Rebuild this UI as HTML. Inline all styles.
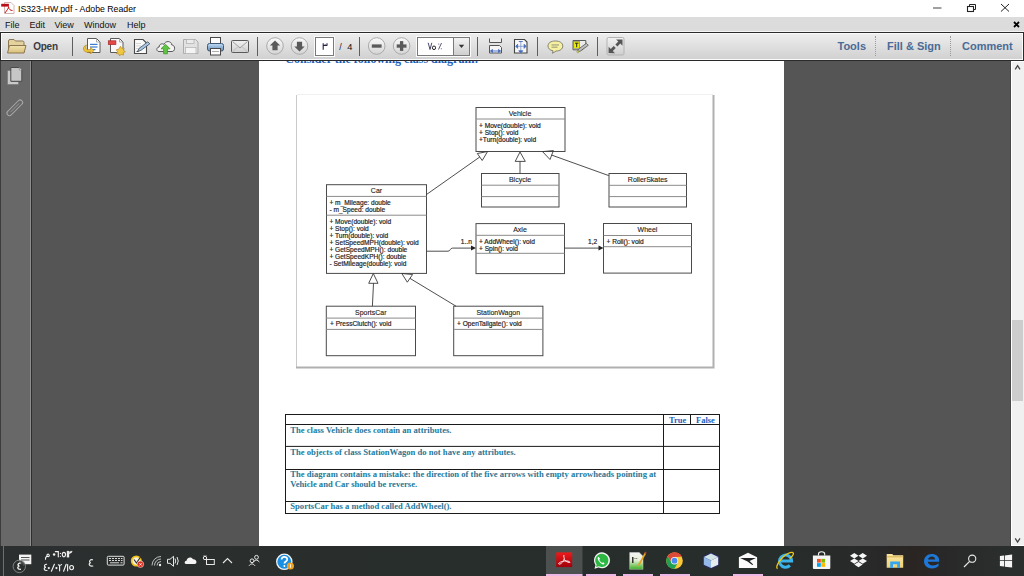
<!DOCTYPE html>
<html><head><meta charset="utf-8">
<style>
*{margin:0;padding:0;box-sizing:border-box}
html,body{width:1024px;height:576px;overflow:hidden;background:#555555;font-family:"Liberation Sans",sans-serif;position:relative}
.a{position:absolute}
.tx{position:absolute;white-space:nowrap;line-height:1}
#title{left:0;top:0;width:1024px;height:17px;background:#fff}
#menu{left:0;top:17px;width:1024px;height:14px;background:#dcdcdc}
#menuw{left:0;top:31px;width:1024px;height:1px;background:#f4f4f4}
#tb{left:0;top:32px;width:1024px;height:29px;background:#2a2a2a}
#tbw{left:1px;top:33px;width:1022px;height:27px;background:#fbfbfb}
#tbin{left:2px;top:34px;width:1020px;height:25px;background:linear-gradient(#ededed,#d1d1d1)}
#side{left:0;top:61px;width:31px;height:485px;background:#686868;border-left:1px solid #3c3c3c}
#sideline{left:30px;top:61px;width:1px;height:485px;background:#8e8e8e}
#sideline2{left:31px;top:61px;width:1px;height:485px;background:#2e2e2e}
#page{left:259px;top:61px;width:525px;height:485px;background:#fff;overflow:hidden}
#sb{left:1011px;top:61px;width:13px;height:485px;background:#f0f0f0;border-left:1px solid #fff;border-top:1px solid #fff;border-bottom:1px solid #fff}
#sbl{left:1010px;top:61px;width:1px;height:485px;background:#474747}
#thumb{left:1012px;top:320px;width:11px;height:81px;background:#cdcdcd}
#task{left:0;top:546px;width:1024px;height:30px;background:linear-gradient(90deg,#2c2f2f 0px,#2a2e2d 250px,#282e2b 450px,#272d2a 780px,#29292a 870px,#2a2522 915px,#29292a 950px,#2a2e2c 1000px,#2a2e2c 1024px)}
.menu{top:21px;font-size:9px;color:#111}
.sep{position:absolute;width:1px;background:#5e5e5e}
.rt{font-weight:bold;font-size:11px;color:#4a6b96;top:41px}
.dsep{position:absolute;top:36px;height:20px;width:1px;border-left:1px dotted #9a9a9a}
</style></head><body>
<div id="title" class="a"></div>
<div id="menu" class="a"></div><div id="menuw" class="a"></div>
<div id="tb" class="a"></div><div id="tbw" class="a"></div><div id="tbin" class="a"></div>
<div id="side" class="a"></div><div id="sideline" class="a"></div><div id="sideline2" class="a"></div>
<div id="page" class="a"></div>
<div id="sbl" class="a"></div><div id="sb" class="a"></div><div id="thumb" class="a"></div>
<div id="task" class="a"></div>

<!-- title text -->
<div class="tx" style="left:17.5px;top:4px;font-size:9.6px;color:#000;transform:scaleX(0.91);transform-origin:0 0">IS323-HW.pdf - Adobe Reader</div>
<div class="tx menu" style="left:5px">File</div>
<div class="tx menu" style="left:29.5px">Edit</div>
<div class="tx menu" style="left:54.5px">View</div>
<div class="tx menu" style="left:84px">Window</div>
<div class="tx menu" style="left:127px">Help</div>

<!-- toolbar text -->
<div class="tx" style="left:33.2px;top:42.3px;font-size:10px;font-weight:bold;color:#3a3a40;letter-spacing:-0.25px">Open</div>
<div class="tx rt" style="left:837.5px">Tools</div>
<div class="tx rt" style="left:887px">Fill &amp; Sign</div>
<div class="tx rt" style="left:962px">Comment</div>
<div class="dsep" style="left:875px"></div>
<div class="dsep" style="left:950px"></div>
<div class="sep" style="left:72px;top:37px;height:19px"></div>
<div class="sep" style="left:257px;top:37px;height:19px"></div>
<div class="sep" style="left:359px;top:37px;height:19px"></div>
<div class="sep" style="left:477px;top:37px;height:19px"></div>
<div class="sep" style="left:537px;top:37px;height:19px"></div>
<div class="sep" style="left:597px;top:37px;height:19px"></div>


<svg class="a" style="left:0;top:0" width="1024" height="576" viewBox="0 0 1024 576">
<defs>
<linearGradient id="gFold" x1="0" y1="0" x2="0" y2="1"><stop offset="0" stop-color="#f2e3b0"/><stop offset="1" stop-color="#d9c07a"/></linearGradient>
<linearGradient id="gBtn" x1="0" y1="0" x2="0" y2="1"><stop offset="0" stop-color="#fafafa"/><stop offset="1" stop-color="#d4d4d4"/></linearGradient>
<linearGradient id="gPr" x1="0" y1="0" x2="0" y2="1"><stop offset="0" stop-color="#c4dcf2"/><stop offset="1" stop-color="#5f8fc0"/></linearGradient>
<linearGradient id="gEnv" x1="0" y1="0" x2="0" y2="1"><stop offset="0" stop-color="#f2f2f2"/><stop offset="1" stop-color="#cfcfcf"/></linearGradient>
</defs>
<!-- title acrobat icon -->
<path d="M4.5,2.5 h6.5 l3,3 v8 h-9.5 z" fill="#fff" stroke="#c9a0a0" stroke-width="0.8"/>
<rect x="1.2" y="3.8" width="7.7" height="2.8" fill="#b8101a"/>
<path d="M5,13 C7,10 9,8 8.5,6.5 M8.5,7 C9,9.5 10.5,10.5 12.5,10.5" stroke="#d01010" stroke-width="1" fill="none"/>
<!-- window controls -->
<rect x="933" y="7.5" width="8.5" height="1" fill="#444"/>
<rect x="967.5" y="6.5" width="6" height="5" fill="none" stroke="#222" stroke-width="1.1"/>
<path d="M969.5,6.5 v-2 h6 v5 h-2" fill="none" stroke="#222" stroke-width="1"/>
<path d="M1001,4 L1009,11.5 M1009,4 L1001,11.5" stroke="#222" stroke-width="1"/>
<path d="M1014,22 L1019,27 M1019,22 L1014,27" stroke="#000" stroke-width="1.8"/>
<!-- folder -->
<path d="M8.5,52.5 V41 q0,-1.5 1.5,-1.5 h4 l1.5,1.5 h7 q1.5,0 1.5,1.5 v10 z" fill="#e4d29c" stroke="#8c7650" stroke-width="1"/>
<path d="M7.5,53 L9.5,45.5 h16.5 L24,53 z" fill="url(#gFold)" stroke="#8c7650" stroke-width="1" stroke-linejoin="round"/>
<!-- doc icon 1 -->
<path d="M87.5,38.5 h9 l3.5,3.5 v10.5 h-12.5 z" fill="#fff" stroke="#5a5a5a" stroke-width="1"/>
<path d="M96.5,38.5 v3.5 h3.5" fill="none" stroke="#999" stroke-width="0.8"/>
<rect x="90" y="43.8" width="7.5" height="1.2" fill="#3a7ad0"/>
<rect x="90" y="46.4" width="7.5" height="1.2" fill="#3a7ad0"/>
<rect x="90" y="49" width="5.5" height="1.2" fill="#3a7ad0"/>
<path d="M86.5,45 C83,46 82.5,50 85,51.5 C86.5,52.5 89,52.5 90.5,51.8 L90.5,54 L94,50.5 L90.5,47.5 L90.5,49.3 C88.5,50 86.5,50 86,48.5 C85.5,47 86,46 86.5,45 z" fill="#f0c43a" stroke="#b48a22" stroke-width="0.7"/>
<!-- doc icon 2 -->
<path d="M110.5,38.5 h9 l3.5,3.5 v10.5 h-12.5 z" fill="#f8f8f8" stroke="#5a5a5a" stroke-width="1"/>
<path d="M119.5,38.5 v3.5 h3.5" fill="none" stroke="#999" stroke-width="0.8"/>
<rect x="108.3" y="40.8" width="7.6" height="3.8" fill="#e34848" stroke="#a82828" stroke-width="0.7"/>
<path d="M120.5,46.3 l1.2,2.1 2.4,-0.4 -0.6,2.3 1.9,1.4 -2.1,1 0.2,2.4 -2.3,-0.9 -1.6,1.8 -0.9,-2.2 -2.4,-0.1 1.3,-2 -1.3,-2 2.3,-0.4 z" fill="#f0c840" stroke="#b08a30" stroke-width="0.7"/>
<!-- sign icon -->
<path d="M134.5,39.5 h8.5 l3.5,3.5 v10.5 h-12 z" fill="#fafafa" stroke="#4a4a4a" stroke-width="1.1"/>
<rect x="136" y="43" width="5" height="0.8" fill="#ccc"/><rect x="136" y="45.5" width="5" height="0.8" fill="#ccc"/><rect x="136" y="48" width="4" height="0.8" fill="#ccc"/>
<path d="M137.5,51.5 L139,48.5 L147.8,41.8 L149.8,43.8 L141,50.3 z" fill="#a8c8e6" stroke="#3e4a58" stroke-width="0.8"/>
<path d="M136.5,51.5 h2" stroke="#333" stroke-width="0.8"/>
<!-- cloud -->
<path d="M159,51.5 C156,51.5 156.2,47 159.2,47 C159,44 162.5,43 164,44.5 C165,40.5 171.5,40.5 171.8,45 C175.5,45 175.5,51.5 172,51.5 z" fill="#f3f3f3" stroke="#5a5a5a" stroke-width="1"/>
<path d="M165.5,44.3 L170,48.8 h-2.6 v5 h-3.8 v-5 h-2.6 z" fill="#62c444" stroke="#3b9a22" stroke-width="0.8"/>
<!-- save (disabled) -->
<path d="M183.5,39.5 h12 l2.5,2.5 v11.5 h-14.5 z" fill="#e2e2e2" stroke="#ababab" stroke-width="1"/>
<rect x="186.5" y="39.5" width="7.5" height="4" fill="#ececec" stroke="#b4b4b4" stroke-width="0.8"/>
<rect x="185.5" y="47.5" width="10.5" height="6" fill="#f4f4f4" stroke="#b8b8b8" stroke-width="0.8"/>
<!-- printer -->
<rect x="210.5" y="37.5" width="10" height="6" fill="#fdfdfd" stroke="#4a4a4a" stroke-width="1"/>
<rect x="207.5" y="43.5" width="16" height="7.5" rx="2" fill="url(#gPr)" stroke="#3d5878" stroke-width="1"/>
<rect x="210.5" y="48.5" width="10" height="6.5" fill="#fdfdfd" stroke="#4a4a4a" stroke-width="1"/>
<rect x="212" y="51" width="7" height="0.8" fill="#9a9a9a"/>
<!-- envelope -->
<rect x="231.5" y="40.5" width="17" height="12" rx="1" fill="url(#gEnv)" stroke="#5a5a5a" stroke-width="1"/>
<path d="M232.5,41.5 L240,48 L247.5,41.5" fill="none" stroke="#8a8a8a" stroke-width="0.8"/>
<path d="M232.5,52 L237.5,47 M247.5,52 L242.5,47" fill="none" stroke="#a8a8a8" stroke-width="0.6"/>
<!-- up/down circles -->
<circle cx="275" cy="46" r="8.3" fill="url(#gBtn)" stroke="#a4a4a4" stroke-width="0.9"/>
<path d="M275,40.6 L280.2,45.6 h-2.6 v4.6 h-5.2 v-4.6 h-2.6 z" fill="#5a5a5a"/>
<circle cx="299.5" cy="46" r="8.3" fill="url(#gBtn)" stroke="#a4a4a4" stroke-width="0.9"/>
<path d="M299.5,51.4 L304.7,46.4 h-2.6 v-4.6 h-5.2 v4.6 h-2.6 z" fill="#5a5a5a"/>
<!-- page box -->
<rect x="314.5" y="36.5" width="20" height="20" fill="none" stroke="#fafafa" stroke-width="1"/><rect x="315.5" y="37.5" width="18" height="18" fill="#fff" stroke="#7a7a7a" stroke-width="1"/>
<!-- minus/plus -->
<circle cx="376.7" cy="46" r="8.3" fill="url(#gBtn)" stroke="#a4a4a4" stroke-width="0.9"/>
<rect x="371.8" y="44.4" width="9.8" height="3.3" fill="#5a5a5a"/>
<circle cx="401.6" cy="46" r="8.3" fill="url(#gBtn)" stroke="#a4a4a4" stroke-width="0.9"/>
<rect x="396.7" y="44.4" width="9.8" height="3.3" fill="#5a5a5a"/>
<rect x="399.95" y="41.1" width="3.3" height="9.8" fill="#5a5a5a"/>
<!-- zoom box -->
<rect x="416.5" y="36.5" width="54" height="20" fill="none" stroke="#fafafa" stroke-width="1"/>
<rect x="417.5" y="37.5" width="52" height="18" fill="#fff" stroke="#7a7a7a" stroke-width="1"/>
<rect x="454" y="38" width="15" height="17" fill="url(#gEnv)"/>
<path d="M453.5,38 v17.5" stroke="#7a7a7a" stroke-width="1"/>
<path d="M458.8,44.8 h5.4 l-2.7,3.3 z" fill="#333"/>
<!-- fit width -->
<path d="M489.5,38.5 v4 h12 v-4" fill="#ededed" stroke="#555" stroke-width="1"/>
<path d="M489.5,53 v-7.5 h10 l2,2 v5.5 z" fill="#f6f6f6" stroke="#555" stroke-width="1"/>
<path d="M490.5,51 h10 M490.5,51 l2,-1.5 v3 z M500.5,51 l-2,-1.5 v3 z" fill="#4a6ec0" stroke="#4a6ec0" stroke-width="0.9"/>
<!-- fit page -->
<path d="M514.5,39.5 h10 l2.5,2.5 v11 h-12.5 z" fill="#f6f6f6" stroke="#444" stroke-width="1.1"/>
<path d="M520.8,41 v10.5 M516,46.3 h10" stroke="#7a94cc" stroke-width="0.8"/>
<path d="M518.8,41.5 h4 M520.8,53 l-2,-2.2 h4 z M515.8,46.3 l1.8,-2 v4 z M526,46.3 l-1.8,-2 v4 z" fill="#4a6ec0" stroke="#4a6ec0" stroke-width="0.9"/>
<!-- comment -->
<path d="M555.3,41 C560,41 562.8,43 562.8,46 C562.8,49 560,51 556,51 L552.5,53.3 L553,50.8 C550,50.3 548,48.5 548,46 C548,43 550.8,41 555.3,41 z" fill="#f5f1a0" stroke="#7a7a6a" stroke-width="0.9"/>
<rect x="551.5" y="44.5" width="7.5" height="0.9" fill="#8a8a70"/><rect x="551.5" y="46.7" width="6" height="0.9" fill="#8a8a70"/>
<!-- highlight text -->
<path d="M573,40.5 h12.8 v5.5 l-3.5,3.8 h-9.3 z" fill="#ececec" stroke="#5a5a5a" stroke-width="1"/>
<rect x="573.8" y="41.6" width="5.8" height="6.6" fill="#f0f000" stroke="#6a6a30" stroke-width="0.5"/>
<path d="M575,43.2 h3.4 M576.7,43.2 v4" stroke="#222" stroke-width="1"/>
<path d="M577.3,51.8 L578.6,49 L586.3,43.3 L588.3,45.3 L580.5,51 z" fill="#bdbdbd" stroke="#555" stroke-width="0.8"/>
<circle cx="577.8" cy="51.8" r="1" fill="#e8e850" stroke="#808030" stroke-width="0.5"/>
<!-- fullscreen -->
<rect x="607" y="37.5" width="17" height="17.5" rx="1.5" fill="url(#gEnv)" stroke="#b3b3b3" stroke-width="1"/>
<path d="M622.5,39.6 v6.2 l-2.2,-2.2 l-2.9,2.9 l-2,-2 l2.9,-2.9 l-2.2,-2.2 z" fill="#555"/>
<path d="M608.6,53 v-6.2 l2.2,2.2 l2.9,-2.9 l2,2 l-2.9,2.9 l2.2,2.2 z" fill="#555"/>
<!-- side panel icons -->
<path d="M7.5,70.5 h4 v11 h7 v3 h-11 z" fill="#c9c9c9" stroke="#6a6a6a" stroke-width="0.5"/>
<path d="M10.8,67.5 h8.5 l2.5,2.5 v11.3 h-11 z" fill="#c6c6c6" stroke="#4a4a4a" stroke-width="1"/><path d="M19.3,67.5 v2.5 h2.5" fill="#e8e8e8" stroke="#777" stroke-width="0.6"/>
<g transform="rotate(-45 14.8 107.8)" fill="none" stroke="#a8a8a8" stroke-width="1"><rect x="4.8" y="105.3" width="20" height="5" rx="2.5"/><path d="M8.5,107.8 h12.5" stroke="#9a9a9a" stroke-width="0.9"/></g>
</svg>

<svg class="a" style="left:0;top:0" width="1024" height="576" viewBox="0 0 1024 576">
<defs><clipPath id="pc"><rect x="259" y="61" width="525" height="485"/></clipPath></defs>
<g clip-path="url(#pc)">
<text x="285.3" y="62.8" font-family="Liberation Serif" font-weight="bold" font-size="12" fill="#1d5cb6">Consider the following class diagram:</text>
</g>
<!-- frame -->
<rect x="296" y="94.5" width="417" height="272.5" fill="#fff"/>
<path d="M296.5,367 V95" fill="none" stroke="#cacaca" stroke-width="1"/><path d="M297,94.5 H713" fill="none" stroke="#f0f0f0" stroke-width="1"/>
<path d="M713.5,95 V367.5 H296" fill="none" stroke="#b0b0b0" stroke-width="2"/>
<g fill="none" stroke="#4a4a4a" stroke-width="1">
<!-- boxes -->
<rect x="476" y="107.5" width="89" height="44"/>
<rect x="481.5" y="173.5" width="77.5" height="33.5"/>
<rect x="609" y="173.5" width="77.5" height="33.5"/>
<rect x="326.5" y="184.7" width="100" height="88.7"/>
<rect x="476" y="223.6" width="88.5" height="50"/>
<rect x="603.5" y="223.5" width="88" height="49.6"/>
<rect x="326.3" y="306.2" width="89.2" height="49.5"/>
<rect x="453.7" y="306.2" width="89.2" height="49.5"/>
</g>
<g fill="none" stroke="#8a8a8a" stroke-width="1">
<path d="M476,119 H565"/>
<path d="M481.5,185.2 H559 M481.5,196.6 H559"/>
<path d="M609,185.3 H686.5 M609,196.6 H686.5"/>
<path d="M326.5,196.4 H426.5 M326.5,215.2 H426.5"/>
<path d="M476,235.3 H564.5 M476,253.3 H564.5"/>
<path d="M603.5,235.5 H691.5 M603.5,246.7 H691.5"/>
<path d="M326.3,318.1 H415.5 M326.3,329.4 H415.5"/>
<path d="M453.7,318.1 H542.9 M453.7,329.4 H542.9"/>
</g>
<g fill="none" stroke="#3a3a3a" stroke-width="0.9">
<path d="M426.5,194.5 L479.75,157"/>
<path d="M487.6,151.5 L477.3,153.5 L482.2,160.5 z"/>
<path d="M520,161.4 V173.5"/>
<path d="M520,152 L515.2,161.4 H525.3 z"/>
<path d="M608.75,175.6 L551.7,155.1"/>
<path d="M542.5,151.6 L553.4,150.6 L550,159.5 z"/>
<path d="M372.4,306.2 L373.5,283.3"/>
<path d="M373.3,273.5 L368.7,283.3 H378 z"/>
<path d="M456,306.2 L409.95,278.35"/>
<path d="M401.8,273.5 L412.6,274.5 L407.3,282.2 z"/>
<path d="M426.5,251.2 H448 C450.5,251.2 450,248.1 452.5,248.1 H472"/>
<path d="M564.5,248.1 H599"/>
</g>
<path d="M471,245.6 L476,248.1 L471,250.6 z" fill="#222"/>
<path d="M598.5,245.6 L603.5,248.1 L598.5,250.6 z" fill="#222"/>
<g font-family="Liberation Sans" fill="#222" font-size="7" text-anchor="middle" stroke="#222" stroke-width="0.12">
<text x="520" y="115.8">Vehicle</text>
<text x="520" y="181.8">Bicycle</text>
<text x="647.7" y="182">RollerSkates</text>
<text x="376.5" y="193.1">Car</text>
<text x="520" y="231.9">Axle</text>
<text x="647.5" y="231.7">Wheel</text>
<text x="370.8" y="314.8">SportsCar</text>
<text x="498.3" y="314.8">StationWagon</text>
</g>
<g font-family="Liberation Sans" fill="#222" font-size="6.6" stroke="#222" stroke-width="0.18">
<text x="479" y="128">+ Move(double): void</text>
<text x="479" y="135">+ Stop(): void</text>
<text x="479" y="142">+Turn(double): void</text>
<text x="329.4" y="205">+ m_Mileage: double</text>
<text x="329.4" y="212">- m_Speed: double</text>
<text x="329.4" y="224">+ Move(double): void</text>
<text x="329.4" y="231">+ Stop(): void</text>
<text x="329.4" y="238">+ Turn(double): void</text>
<text x="329.4" y="245">+ SetSpeedMPH(double): void</text>
<text x="329.4" y="252">+ GetSpeedMPH(): double</text>
<text x="329.4" y="259">+ GetSpeedKPH(): double</text>
<text x="329.4" y="266">- SetMileage(double): void</text>
<text x="479" y="244">+ AddWheel(): void</text>
<text x="479" y="251">+ Spin(): void</text>
<text x="606.5" y="243.5">+ Roll(): void</text>
<text x="330" y="326">+ PressClutch(): void</text>
<text x="457" y="326">+ OpenTailgate(): void</text>
<text x="460.8" y="243.9">1..n</text>
<text x="588" y="243.5">1,2</text>
</g>
<!-- table -->
<g fill="none" stroke="#1a1a1a" stroke-width="1">
<rect x="285.5" y="414.5" width="434" height="99"/>
<path d="M285.5,424.5 H719.5 M285.5,446.4 H719.5 M285.5,469.5 H719.5 M285.5,501.5 H719.5"/>
<path d="M663.5,414.5 V513.5 M690.5,414.5 V424.5"/>
</g>
<g font-family="Liberation Serif" font-weight="bold" font-size="8.6" fill="#287898">
<text x="290.3" y="432.9">The class Vehicle does contain an attributes.</text>
<text x="290.3" y="454.7">The objects of class StationWagon do not have any attributes.</text>
<text x="290.3" y="476.8">The diagram contains a mistake: the direction of the five arrows with empty arrowheads pointing at</text>
<text x="290.3" y="487.2">Vehicle and Car should be reverse.</text>
<text x="290.3" y="508.7">SportsCar has a method called AddWheel().</text>
</g>
<g font-family="Liberation Serif" font-weight="bold" font-size="8.5" fill="#1d62c0">
<text x="669" y="422.6">True</text>
<text x="696" y="422.6">False</text>
</g>
</svg>

<svg class="a" style="left:0;top:0" width="1024" height="576" viewBox="0 0 1024 576">
<defs>
<linearGradient id="gRed" x1="0" y1="0" x2="0" y2="1"><stop offset="0" stop-color="#ee1a1a"/><stop offset="1" stop-color="#a0000c"/></linearGradient>
<linearGradient id="gNpp" x1="0" y1="0" x2="0" y2="1"><stop offset="0" stop-color="#f4f4f4"/><stop offset="0.45" stop-color="#e8f0d8"/><stop offset="1" stop-color="#3cb020"/></linearGradient>
<linearGradient id="gCube" x1="0" y1="0" x2="1" y2="1"><stop offset="0" stop-color="#a8c8f0"/><stop offset="1" stop-color="#e8eef4"/></linearGradient>
<linearGradient id="gFld" x1="0" y1="0" x2="0" y2="1"><stop offset="0" stop-color="#fae6a0"/><stop offset="1" stop-color="#f0d078"/></linearGradient>
</defs>
<!-- scrollbar arrows -->
<path d="M1015.2,69.3 L1017.6,65.6 L1020,69.3" fill="none" stroke="#444" stroke-width="1.3"/>
<path d="M1015.2,538.3 L1017.6,542 L1020,538.3" fill="none" stroke="#444" stroke-width="1.3"/>
<!-- page number digits (arabic) -->
<path d="M323.2,43.2 V49.8 M323.2,45.5 H327 M325.1,45.5 V44.2 M327,45.7 V43.3" fill="none" stroke="#222244" stroke-width="1.1"/>
<text x="339.3" y="50.3" font-family="Liberation Sans" font-size="9" fill="#222">/</text><text x="347.3" y="50.3" font-family="Liberation Sans" font-size="9.2" fill="#111">4</text>
<!-- zoom 75% -->
<path d="M428.2,42.8 L430,49.5 L431.8,42.8" fill="none" stroke="#33335a" stroke-width="0.9"/>
<ellipse cx="434" cy="47.8" rx="1.6" ry="1.8" fill="none" stroke="#222" stroke-width="1"/>
<path d="M438.5,49.5 L441.5,43" fill="none" stroke="#446" stroke-width="0.9"/>
<circle cx="438.8" cy="44" r="0.55" fill="#446"/><circle cx="441.3" cy="48.8" r="0.55" fill="#446"/>
<!-- taskbar -->
<rect x="3" y="546" width="1" height="30" fill="#6c6f70"/>
<rect x="546" y="546" width="36.5" height="30" fill="#4c5150"/>
<g fill="#eeb8e6">
<rect x="546" y="574" width="36.5" height="2"/>
<rect x="586" y="574" width="30" height="2"/>
<rect x="623" y="574" width="30" height="2"/>
<rect x="660" y="574" width="30" height="2"/>
<rect x="733" y="574" width="30" height="2"/>
</g>
<!-- notification -->
<rect x="19" y="554.6" width="12.3" height="9.6" fill="#f4f4f4"/>
<path d="M25,564 l-2,2.5 v-2.5 z" fill="#f4f4f4"/>
<rect x="21" y="557" width="8.5" height="1" fill="#555"/><rect x="21" y="559.5" width="8.5" height="1" fill="#555"/>
<circle cx="19.3" cy="566.4" r="6.2" fill="#2b2f2e" fill-opacity="0.85" stroke="#8a8a8a" stroke-width="0.9"/>
<path d="M20.6,563.2 C17.8,562.6 17.2,565.8 19.4,566 C16.8,566.5 17.4,569.8 20.9,569.3" fill="none" stroke="#f0f0f0" stroke-width="1.4"/>
<!-- time/date (arabic digits) -->
<g fill="none" stroke="#f0f0f0" stroke-width="1.15" stroke-linecap="round">
<path d="M48.2,554.1 C46.6,554.1 46.4,556.6 48.2,556.6 C49.6,556.6 49.7,554.6 48.4,554.2 M46.8,556.2 C45.8,557 45.4,558.3 45.5,559.2"/>
<path d="M55.4,551.6 H58.3 V556.8"/>
<ellipse cx="63.9" cy="554.6" rx="1.6" ry="2.2"/>
<path d="M67.4,551.4 V556.9"/>
<path d="M68.6,551.4 V556.9 M68.6,553 C69.8,553.2 71.4,553 71.8,551.4 M70.2,551.6 V552.6"/>
<path d="M46.6,564.3 C44.3,564 43.6,567 45.9,567.1 C43.4,567.6 43.7,570.7 47,570.5"/>
<path d="M54.4,564.3 L51.4,571.2"/>
<path d="M58.4,564.8 C59.3,565.6 60.8,565.4 61.5,564.5 M59.6,565.2 V570.8"/>
<path d="M66.2,564.3 L63.6,571.2"/>
<path d="M67.6,564.5 V570.8"/>
<ellipse cx="71.6" cy="567.6" rx="1.9" ry="2.1"/>
<path d="M92.5,559.8 C89.5,559 88.6,562.5 90.8,562.8 C88.3,563.3 88.6,566.5 92.8,566"/>
</g>
<g fill="#f0f0f0">
<circle cx="54.1" cy="554.6" r="1.25"/>
<circle cx="60.4" cy="553.4" r="0.6"/><circle cx="60.4" cy="556.3" r="0.6"/>
<circle cx="48.8" cy="568.1" r="1.1"/><circle cx="56.45" cy="568.1" r="1.1"/>
</g>
<!-- keyboard -->
<rect x="107.3" y="556.3" width="16.8" height="8.8" rx="1" fill="none" stroke="#e0e0e0" stroke-width="1"/>
<g fill="#d8d8d8"><rect x="109" y="558" width="2" height="1"/><rect x="112" y="558" width="2" height="1"/><rect x="115" y="558" width="2" height="1"/><rect x="118" y="558" width="2" height="1"/><rect x="121" y="558" width="1.5" height="1"/>
<rect x="109" y="560" width="2" height="1"/><rect x="112" y="560" width="2" height="1"/><rect x="115" y="560" width="2" height="1"/><rect x="118" y="560" width="2" height="1"/><rect x="121" y="560" width="1.5" height="1"/>
<rect x="110" y="562.3" width="9" height="1"/><rect x="120.5" y="562.3" width="2" height="1"/></g>
<!-- norton -->
<circle cx="136.3" cy="561" r="5.5" fill="#f2c21a"/>
<circle cx="136.3" cy="561" r="3.8" fill="#f4f0e0"/>
<path d="M134,559.5 L136.5,563 L141.5,555.5" fill="none" stroke="#333" stroke-width="1.2"/>
<circle cx="140.4" cy="564.2" r="3.3" fill="#d83020" stroke="#fff" stroke-width="0.5"/>
<path d="M139.3,563.1 l2.4,2.4 M141.7,563.1 l-2.4,2.4" stroke="#fff" stroke-width="0.8"/>
<!-- wifi -->
<g fill="none" stroke="#cfcfcf" stroke-width="0.9">
<path d="M152,565.5 A9,9 0 0 1 161,556.5"/><path d="M154.5,565.5 A6.5,6.5 0 0 1 161,559"/><path d="M157,565.5 A4,4 0 0 1 161,561.5"/>
</g>
<circle cx="160" cy="565" r="1.2" fill="#eee"/>
<!-- speaker -->
<path d="M167.5,559.3 h2.5 l3.5,-3 v10 l-3.5,-3 h-2.5 z" fill="none" stroke="#e8e8e8" stroke-width="1"/>
<path d="M175,558.5 q1.5,2.5 0,5 M177,557 q2.5,4 0,8" fill="none" stroke="#e8e8e8" stroke-width="1"/>
<!-- onedrive -->
<path d="M186,564 C184,564 184.5,560.5 186.5,560.8 C187.3,557 191.5,556.5 193,559.3 C196.5,558.8 198,564 194.5,564 z" fill="#f4f4f4"/>
<!-- power -->
<g fill="none" stroke="#e8e8e8" stroke-width="1">
<rect x="206.5" y="559.5" width="7.8" height="5"/>
<circle cx="205" cy="558" r="1.7"/>
<path d="M204,556.2 v-0.8 M206,556.2 v-0.8"/>
</g>
<!-- chevron -->
<path d="M223,563 L227.5,558.5 L232,563" fill="none" stroke="#e8e8e8" stroke-width="1.1"/>
<!-- people -->
<g fill="none" stroke="#e8e8e8" stroke-width="1">
<circle cx="256.5" cy="557.3" r="1.9"/><path d="M253.8,561.5 q2.7,-3 5.6,0.5"/>
<circle cx="252" cy="560.8" r="1.9"/><path d="M249,565.8 q3,-4 6,0"/>
</g>
<!-- help -->
<circle cx="284.3" cy="561.8" r="7.6" fill="#1a8ee0" stroke="#f4f4f4" stroke-width="1.3"/>
<path d="M281.6,559.6 C281.6,556 287.2,556 287.2,559.4 C287.2,561.4 284.4,561.6 284.4,563.6" fill="none" stroke="#fff" stroke-width="1.7"/>
<circle cx="284.4" cy="566" r="1" fill="#fff"/>
<circle cx="290.4" cy="566" r="3.6" fill="#f0a020"/>
<rect x="290" y="564.3" width="0.9" height="3.4" fill="#fff"/>
<!-- acrobat -->
<rect x="556.2" y="552.4" width="16" height="14.7" fill="url(#gRed)"/>
<path d="M564,555 C563,556 565,558.5 564,560 C563,562 560,565 558.8,564 C558,563 561,561.5 564.5,561 C567,560.5 570,561.5 570,562.3 C570,563 566,562 564,559.5" fill="none" stroke="#fff" stroke-width="0.9"/>
<!-- whatsapp -->
<path d="M594.5,568.8 L595.5,565 A8,8 0 1 1 598.5,567.5 z" fill="#f2f2f2"/>
<path d="M596,567 L596.7,564.6 A6.6,6.6 0 1 1 598.8,566.3 z" fill="#2bb742"/>
<path d="M598.3,556.8 C597,557.8 597.5,559.5 599.5,562 C601.5,564.3 603.5,565 604.6,563.8 L603.3,562.3 L602,562.9 C600.8,562.2 599.8,561 599.3,559.8 L600,558.5 z" fill="#fff"/>
<!-- notepad++ -->
<path d="M629.7,552.5 h9.5 l3.8,3.8 v13 h-13.3 z" fill="url(#gNpp)" stroke="#cfcfcf" stroke-width="0.5"/>
<rect x="632" y="557" width="1.5" height="6" fill="#333"/>
<rect x="634.5" y="558" width="0.9" height="0.9" fill="#444"/><rect x="636.3" y="558" width="0.9" height="0.9" fill="#444"/>
<path d="M638.5,565.5 L645.5,553" stroke="#e8a020" stroke-width="1.6"/>
<path d="M645,553.5 l1,-1.5" stroke="#d03030" stroke-width="1.6"/>
<!-- chrome -->
<circle cx="674.5" cy="560.7" r="8.3" fill="#fbc934"/>
<path d="M667.6,556.2 A8.3,8.3 0 0 1 681.9,556.7 L674.5,556.9 L671.6,562.6 z" fill="#de4a3a"/>
<path d="M667.6,556.2 A8.3,8.3 0 0 0 674.3,569 L677.4,563.6 L671.6,562.6 z" fill="#1fa055"/>
<circle cx="674.5" cy="560.7" r="3.7" fill="#f4f4f4"/>
<circle cx="674.5" cy="560.7" r="2.9" fill="#4a8af0"/>
<!-- cube -->
<path d="M711,552.3 L719.4,556.3 V565.5 L711,569.3 L702.7,565.5 V556.3 z" fill="#2a2a5a"/>
<path d="M711,553.5 L718.2,557 L711,560.5 L703.8,557 z" fill="#d0e4e8"/>
<path d="M703.8,557 L711,560.5 V568 L703.8,564.8 z" fill="#94b8e8"/>
<path d="M711,560.5 L718.2,557 V564.8 L711,568 z" fill="#e4ecf0"/>
<!-- mail -->
<path d="M738.9,557.2 L748,552.8 L757.1,557.2 V567.9 H738.9 z" fill="#fafafa"/>
<path d="M740.2,558 H756 L749.6,561 L753.2,564.6 L752.3,564.9 L747.5,561.6 z" fill="#1e2222"/>
<!-- IE -->
<path d="M779.6,561 H791.6 A6.1,6.1 0 1 0 789.9,565.4" stroke="#3ab2ea" stroke-width="3" fill="none"/>
<path d="M777.5,568.8 C774.5,567 781,557 788,553.5 C791.5,551.8 794,552 793.3,554.3 C792.8,555.8 791.5,557 790,558.3" fill="none" stroke="#f2c418" stroke-width="1.3"/>
<!-- store -->
<path d="M812.9,555.5 H830.3 V568 Q830.3,569 829.3,569 H813.9 Q812.9,569 812.9,568 z" fill="#f4f4f4"/>
<path d="M818.5,555.5 V554 Q818.5,551.8 821.6,551.8 Q824.7,551.8 824.7,554 V555.5" fill="none" stroke="#f4f4f4" stroke-width="1.1"/>
<rect x="817" y="558.9" width="3.8" height="3.7" fill="#f25022"/><rect x="821.3" y="558.9" width="3.8" height="3.7" fill="#7fba00"/>
<rect x="817" y="563.1" width="3.8" height="3.7" fill="#00a4ef"/><rect x="821.3" y="563.1" width="3.8" height="3.7" fill="#ffb900"/>
<!-- dropbox -->
<g fill="#f6f6f6">
<path d="M854.3,553 L850,555.7 L854.3,558.4 L858.5,555.7 z"/><path d="M862.7,553 L858.5,555.7 L862.7,558.4 L867,555.7 z"/>
<path d="M854.3,558.4 L850,561.1 L854.3,563.8 L858.5,561.1 z"/><path d="M862.7,558.4 L858.5,561.1 L862.7,563.8 L867,561.1 z"/>
<path d="M858.5,561.9 L854.3,564.6 L858.5,567.3 L862.7,564.6 z"/>
</g>
<!-- explorer -->
<path d="M886.7,554 h5.5 l1.2,1.3 h9.8 v12.4 h-16.5 z" fill="url(#gFld)"/>
<rect x="886.7" y="556.3" width="16.5" height="1" fill="#d8b050"/>
<path d="M890.2,568 V561.6 H900 V568 H897.2 V564.2 H893 V568 z" fill="#35a6ee"/>
<!-- edge -->
<path d="M931.8,554 C927,554 924,557.5 924,561.3 C924,565.5 927.3,568.5 932,568.5 C934.8,568.5 937,567.5 938.5,566 V563.3 C937,564.8 935,565.5 932.8,565.5 C929.8,565.5 928,563.8 927.8,561.8 H939.2 V560.3 C939.2,556.5 936,554 931.8,554 z M928,559.5 C928.5,557.5 930.2,556.5 931.8,556.5 C933.8,556.5 935,557.8 935.2,559.5 z" fill="#1e78d8"/>
<!-- search -->
<circle cx="972.2" cy="558.7" r="3.6" fill="none" stroke="#e8e8e8" stroke-width="1.1"/>
<path d="M969.6,561.3 L964,567" stroke="#e8e8e8" stroke-width="1.2"/>
<!-- windows -->
<g fill="#f4f4f4">
<path d="M999.9,556 L1004,555.5 V560 H999.9 z"/><path d="M1004.8,555.4 L1012.1,554.5 V560 H1004.8 z"/>
<path d="M999.9,560.8 H1004 V566.6 L999.9,566.1 z"/><path d="M1004.8,560.8 H1012.1 V567.4 L1004.8,566.7 z"/>
</g>
</svg>
</body></html>
